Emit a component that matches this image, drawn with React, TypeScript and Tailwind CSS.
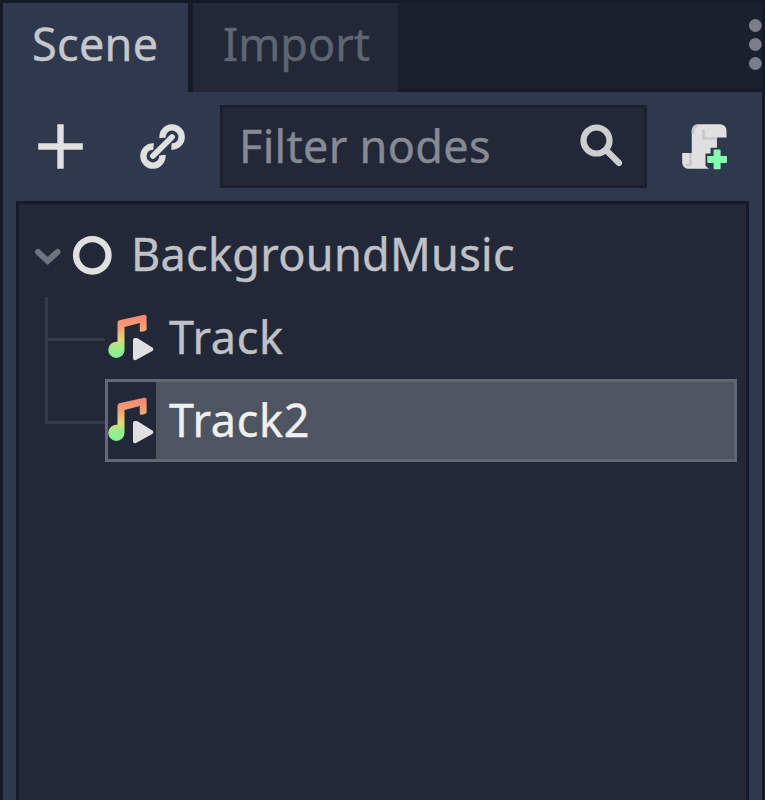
import type { ReactNode } from "react";

function AddIcon() {
  return (
    <svg width="51" height="51" viewBox="0 0 16 16" fill="#e0e0e0">
      <path d="M7 1h2v6h6v2H9v6H7V9H1V7h6z" />
    </svg>
  );
}

function LinkIcon() {
  return (
    <svg width="51" height="51" viewBox="0 0 16 16" fill="none" stroke="#e0e0e0" strokeWidth="2">
      <path d="M8.02 5.3A3 3 0 1 1 10.8 8M7.98 10.7A3 3 0 1 1 5.2 8" />
      <path d="M5 11 11 5" strokeWidth="1.8" strokeLinecap="round" />
    </svg>
  );
}

function SearchIcon() {
  return (
    <svg width="51" height="51" viewBox="0 0 51 51" fill="none" stroke="#cdced2" strokeWidth="6.2">
      <circle cx="18.5" cy="19.5" r="13" />
      <path d="m28.5 29.5 12.5 12.5" strokeLinecap="round" />
    </svg>
  );
}

function ScriptCreateIcon() {
  return (
    <svg width="51" height="51" viewBox="0 0 16 16">
      <path
        fill="#e0e0e0"
        d="M6 1a2 2 0 0 0-2 2v7H1v3a2 2 0 0 0 2 2h6.4L8.3 14V10.2h1.6V8.4h2V5.2h3V3a2 2 0 0 0-2-2z"
      />
      <path fill="#c4c6cb" d="M6 1a2 2 0 0 0-2 2v1h.9V3A1.1 1.1 0 0 1 6 1.9zM7.3 2.6h.8V5.2H12v.6H7.3zM3.2 10H4v3.2a1 1 0 0 1-2 .2h1.2z" />
      <path
        fill="#84ffb0"
        d="M11.1 9.2h1.7v2h2v1.7h-2v2h-1.7v-2h-2v-1.7h2z"
        stroke="#84ffb0"
        strokeWidth=".5"
        strokeLinejoin="round"
      />
    </svg>
  );
}

function MenuDots() {
  return (
    <svg width="14" height="51" viewBox="0 0 14 51" fill="#7b7e89">
      <circle cx="7.3" cy="6.5" r="6.4" />
      <circle cx="7.3" cy="25.5" r="6.4" />
      <circle cx="7.3" cy="44.5" r="6.4" />
    </svg>
  );
}

function MusicIcon() {
  return (
    <svg width="47" height="51" viewBox="0 0 47 51" className="shrink-0">
      <defs>
        <linearGradient id="note" gradientUnits="userSpaceOnUse" x1="0" y1="3" x2="0" y2="45">
          <stop offset="0" stopColor="#f58674" />
          <stop offset=".3" stopColor="#f0a072" />
          <stop offset=".58" stopColor="#e3d878" />
          <stop offset=".8" stopColor="#9cec8b" />
          <stop offset="1" stopColor="#84f098" />
        </linearGradient>
      </defs>
      <path
        fill="url(#note)"
        d="M9.5 29.8V10.7q0-1.8 1.8-2.4L36 2.8q2.6-.5 2.6 1.8V18q-2.8 2.2-6.8 1.6V11L16.5 15V37.5a8.1 8.1 0 1 1-7-7.7z"
      />
      <path fill="#e0e0e0" stroke="#e0e0e0" strokeWidth="4" strokeLinejoin="round" d="M27 28V46.2L43.3 37.2 28.5 28z" />
    </svg>
  );
}

function TrackRow({ name, selected = false }: { name: string; selected?: boolean }) {
  return (
    <li
      className={
        selected
          ? "flex h-[83px] items-center border-[3px] border-[#626774] bg-[#4f5560] text-[#eeeff0]"
          : "flex h-[83px] items-center border-[3px] border-transparent text-[#bfc1c6]"
      }
    >
      <span className="flex h-full w-[48px] shrink-0 items-center bg-[#222837]">
        <MusicIcon />
      </span>
      <Label className="pb-[2px] pl-[13px] tracking-[0.7px]">{name}</Label>
    </li>
  );
}

function Label({ children, className = "" }: { children: ReactNode; className?: string }) {
  return (
    <span className={`block whitespace-nowrap leading-[60px] [-webkit-text-stroke:0.4px_currentColor] ${className}`}>
      {children}
    </span>
  );
}

export default function App() {
  return (
    <div className="flex h-[800px] w-[765px] flex-col overflow-hidden border-x-[3px] border-t-[3px] border-[#151a28] bg-[#30384d] font-['Noto_Sans',sans-serif] text-[45px] tracking-[0.3px]">
      <header className="flex h-[89px] shrink-0 bg-[#1b202d]">
        <div className="w-[185px] bg-[#30384d] pl-[29px] pt-[11px] text-[#c5c7cc]">
          <Label>Scene</Label>
        </div>
        <div className="w-[5px] bg-[#161b29]" />
        <div className="w-[205px] bg-[#222837] pl-[30px] pt-[11px] text-[#5f6571]">
          <Label className="tracking-[0px]">Import</Label>
        </div>
        <div className="flex flex-1 justify-end border-b-[3px] border-[#161b29] pt-[16px]">
          <MenuDots />
        </div>
      </header>

      <div className="flex h-[109px] shrink-0 items-start pt-[13px]">
        <button className="ml-[32px] mt-[16px]"><AddIcon /></button>
        <button className="ml-[51px] mt-[16px]"><LinkIcon /></button>
        <div className="ml-[32px] flex h-[83px] w-[427px] items-center justify-between border-[3px] border-[#1b202e] bg-[#222837] pl-[16px] pr-[15px] text-[#868a94]">
          <Label className="pb-[2px]">Filter nodes</Label>
          <SearchIcon />
        </div>
        <button className="ml-[32px] mt-[16px]"><ScriptCreateIcon /></button>
      </div>

      <main className="ml-[13px] mr-[13px] flex-1 border-x-[3px] border-t-[3px] border-[#161b29] bg-[#222837] pl-[14px] pr-[9px] pt-[9px]">
        <div className="flex h-[83px] items-center text-[#bfc1c6]">
          <svg width="30" height="24" viewBox="0 0 30 24" fill="none" stroke="#70747f" strokeWidth="6">
            <path d="m5 9 9.7 9 9.8-9" strokeLinecap="round" />
          </svg>
          <svg width="42" height="42" viewBox="0 0 42 42" fill="none" stroke="#e0e0e0" strokeWidth="6.4" className="ml-[8px]">
            <circle cx="21.3" cy="21.3" r="16.2" />
          </svg>
          <Label className="pb-[2px] pl-[18px]">BackgroundMusic</Label>
        </div>
        <div className="flex">
          <div className="ml-[12px] w-[60px] shrink-0 pt-[1px]">
            <div className="h-[44px] border-b-[3px] border-l-[3px] border-[#343a4a]" />
            <div className="h-[83px] border-b-[3px] border-l-[3px] border-[#343a4a]" />
          </div>
          <ul className="flex-1">
            <TrackRow name="Track" />
            <TrackRow name="Track2" selected />
          </ul>
        </div>
      </main>
    </div>
  );
}
